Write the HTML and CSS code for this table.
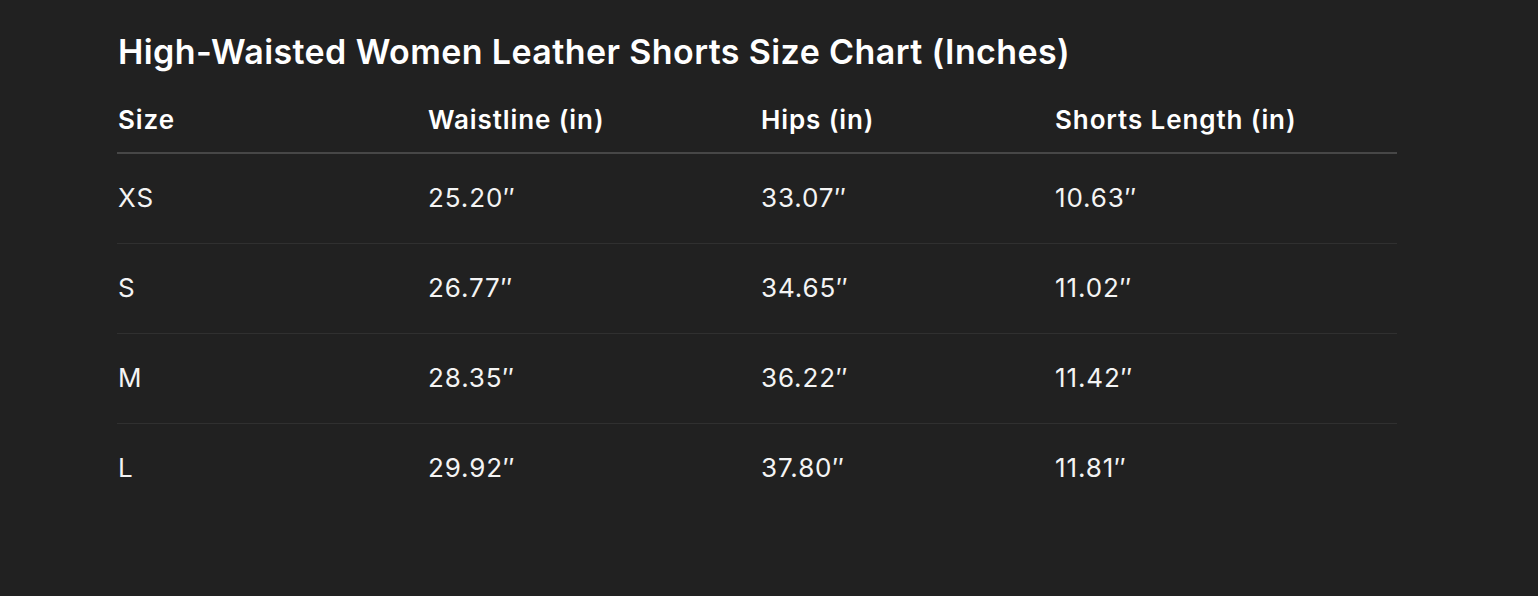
FILE: index.html
```html
<!DOCTYPE html>
<html lang="en">
<head>
<meta charset="utf-8">
<title>Size Chart</title>
<link rel="stylesheet" href="styles.css">
</head>
<body>
<main class="chart">
  <h2 class="chart-title">High-Waisted Women Leather Shorts Size Chart (Inches)</h2>
  <table class="size-table">
    <colgroup>
      <col class="c1"><col class="c2"><col class="c3"><col class="c4">
    </colgroup>
    <thead>
      <tr><th>Size</th><th>Waistline (in)</th><th>Hips (in)</th><th>Shorts Length (in)</th></tr>
    </thead>
    <tbody>
      <tr><td>XS</td><td>25.20″</td><td>33.07″</td><td>10.63″</td></tr>
      <tr><td>S</td><td>26.77″</td><td>34.65″</td><td>11.02″</td></tr>
      <tr><td>M</td><td>28.35″</td><td>36.22″</td><td>11.42″</td></tr>
      <tr><td>L</td><td>29.92″</td><td>37.80″</td><td>11.81″</td></tr>
    </tbody>
  </table>
</main>
</body>
</html>
```
FILE: styles.css
```css
html, body {
  margin: 0;
  background: #212121;
}
body {
  font-family: Inter, "Noto Sans", "Liberation Sans", sans-serif;
  color: #ffffff;
}
.chart {
  padding: 31px 0 0 117px;
  width: 1280px;
}
.chart-title {
  margin: 0;
  font-size: 34px;
  line-height: 42px;
  font-weight: 600;
  letter-spacing: 0.4px;
  padding-left: 1px;
}
.size-table {
  width: 1280px;
  border-collapse: collapse;
  table-layout: fixed;
  margin-top: 13px;
}
.c1 { width: 310px; }
.c2 { width: 333px; }
.c3 { width: 294px; }
.c4 { width: 343px; }
.size-table th,
.size-table td {
  text-align: left;
  padding: 0 0 0 1px;
  font-size: 26px;
  line-height: 26px;
  letter-spacing: 0.9px;
}
.size-table th {
  font-weight: 600;
  height: 64px;
  padding-top: 2px;
  border-bottom: 2px solid #474747;
}
.size-table td {
  font-weight: 400;
  height: 88px;
  padding-bottom: 1px;
  color: #f4f4f4;
  border-bottom: 1px solid #303030;
}
.size-table tbody tr:last-child td {
  border-bottom: none;
}
```
